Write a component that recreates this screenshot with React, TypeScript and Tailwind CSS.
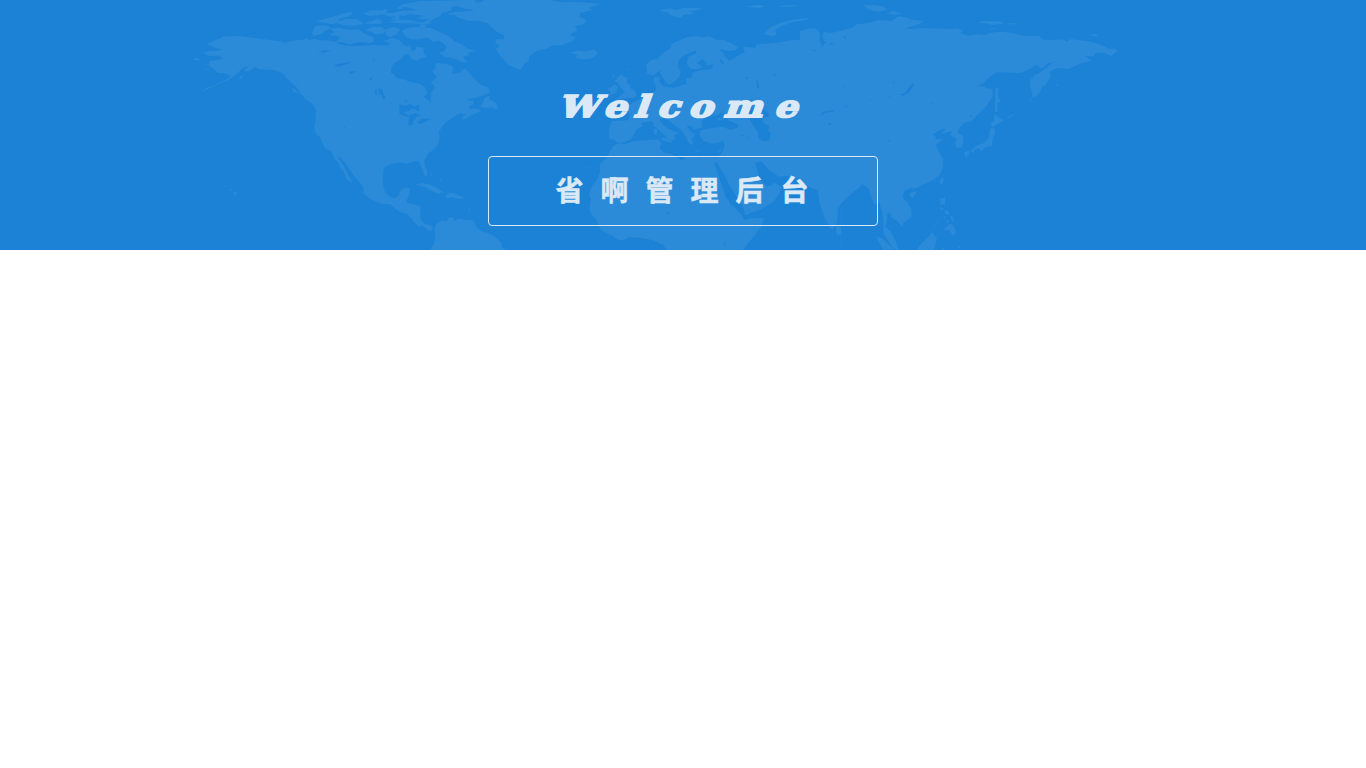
const A_LAND = [
  "M82 131L105 120 125 115 127 110 180 108 240 116 300 124 315 128 345 121 370 119 380 114 388 121 400 116 420 121 450 122 475 128 485 135 530 137 540 133 620 137 640 125 655 120 668 128 678 140 690 135 695 150 690 160 672 165 665 178 650 184 638 195 633 205 632 218 642 222 650 235 670 237 690 246 721 251V314L700 318 690 312 675 318 655 331 680 332 700 327 721 335V345L708 340 690 345 685 360 685 376 694 376 700 345 710 341 721 345V484L700 484 680 491 660 487 635 491 615 500 610 510 608 550 615 575 630 590 645 594 655 588 660 572 672 565 690 565 688 585 680 600 680 614 700 620 721 616V685L702 665 688 645 660 636 640 622 630 612 605 612 570 597 550 580 550 560 535 543 520 525 495 488 480 470 475 473 490 495 500 515 508 530 518 550 500 538 492 515 480 505 475 488 465 478 455 455 434 444 420 412 408 402 403 378 407 360 408 330 398 312 380 300 360 280 350 262 325 240 308 220 285 211 240 208 225 201 205 215 190 212 205 199 192 201 175 217 150 237 120 250 95 262 65 275 78 265 110 252 140 238 152 228 130 218 115 219 100 206 85 196 90 183 110 179 127 178 120 167 85 167 70 158 85 154 110 153 125 148 105 143 90 137Z",
  "M38 178L50 174 62 180 45 181ZM75 209L85 206 88 211ZM170 236L190 225 186 235ZM336 263L345 267 354 280 340 275ZM368 287L395 294 414 313 418 322 400 314 382 299ZM310 222L325 224 346 244 365 262 348 256 330 242ZM131 557L138 560 134 562ZM146 566L158 571 152 573ZM163 573L172 581 163 587Z",
  "M396 99L405 78 430 75 448 80 450 87 438 90 426 101 400 107ZM448 86L480 83 505 90 535 88 555 102 579 112 580 125 568 130 545 125 525 128 508 135 490 127 468 126 480 117 473 108 447 105 465 96Z",
  "M408 64L430 57 460 50 490 40 512 36 519 42 498 52 473 58 485 65 455 72ZM472 70L495 57 528 57 540 62 550 71 525 77 490 76ZM550 41L575 30 600 32 622 26 620 37 595 46 565 48ZM548 69L578 62 590 56 603 60 605 71 575 72ZM555 91L578 80 606 80 618 92 608 102 587 103 575 96ZM617 88L642 80 660 88 650 102 630 112 617 104ZM603 41L640 38 665 32 721 30V71L660 70 620 67 650 61 630 57 650 50 625 49ZM649 26L670 12 721 3V32L690 25ZM665 92L680 84 721 81V119L690 116 675 108ZM610 124L636 113 660 121 642 133ZM692 165L721 145V174L700 176Z",
];
const A_SEA = [
  "M411 153L430 152 433 146 437 151 455 152 437 156 428 161 426 156ZM460 196L485 190 519 184 495 195 475 200ZM505 220L516 213 530 215 515 221ZM568 238L579 229 574 243ZM576 181L584 177 583 184ZM596 264L606 268 617 295 609 298 602 281 595 281ZM585 267L590 267 590 287 585 280ZM626 311L635 305 634 310ZM674 300L682 300 681 306 676 306ZM491 380L497 382 496 387ZM404 242L408 244 405 247Z",
  "M470 129L515 133 545 131 575 136 530 138 490 136ZM665 20L700 25 670 26Z",
];
const B_LAND = [
  "M58 3L228 0 225 8 185 15 150 22 158 30 125 39 122 48 100 57 85 73 58 74ZM138 42L165 36 200 34 225 31 190 25 170 17 195 10 240 7 255 0 450 0 480 7 520 5 603 11 565 24 580 29 540 40 538 52 560 60 552 72 525 79 532 90 508 106 528 112 514 126 485 136 455 137 440 147 410 153 388 169 387 184 375 188 361 211 345 203 325 196 315 182 298 165 287 145 300 140 285 127 290 117 312 118 313 106 295 99 280 86 262 70 235 62 205 63 175 53 165 46Z",
  "M511 158L530 152 555 154 585 149 595 162 570 177 545 178 524 173 532 165Z",
  "M8 91L40 81 65 86 90 83 115 94 132 102 150 110 161 123 185 132 200 145 228 152 202 159 210 166 188 171 205 188 187 186 160 175 135 172 115 159 130 155 140 141 128 128 115 122 100 126 85 113 60 116 45 105 40 119 20 112ZM20 154L45 151 50 140 70 143 72 161 82 172 65 174 50 183 35 177ZM58 82L66 70 80 79 72 88Z",
  "M58 251L75 261 82 278 71 290 91 305 94 277 105 263 94 247 111 231 96 215 106 203 107 188 138 191 155 198 160 208 155 222 180 218 195 204 210 221 225 239 240 253 266 264 269 278 248 286 225 294 202 298 210 303 219 300 221 313 206 318 210 327 236 326 242 334 215 346 190 359 184 354 199 343 180 340 160 351 138 367 126 381 116 397 120 409 114 431 105 445 84 462 73 480 74 495 82 515 80 530 72 524 64 501 58 488Z",
  "M240 322L248 309 255 293 270 286 267 298 290 310 294 321 288 331 280 322 264 323ZM46 554L65 549 89 553 112 565 132 577 115 581 89 569 75 561ZM137 586L151 578 171 582 193 595 170 596 158 592 139 594ZM179 590L194 592 182 598ZM206 622L210 630 207 637ZM90 513L93 527 98 530ZM118 540L129 547 124 538Z",
  "M-2 582L8 566 31 563 29 580 16 594 18 608 40 613 59 620 55 635 60 655 74 673 90 675 99 684 97 692 82 690 66 676 49 674 43 658 30 652 20 637 0 630Z",
  "M91 750L102 730 106 711 103 690 108 672 130 660 139 667 147 653 160 650 161 664 175 656 195 659 220 660 230 681 245 694 268 700 284 709 296 721 307 731 305 740 318 750Z",
  "M632 473L623 486 612 496 610 508 598 521 590 541 578 556 570 572 567 584 573 598 568 628 575 645 590 660 596 674 604 690 620 706 634 715 634 600ZM558 497L562 499 558 503ZM567 500L574 502 569 504ZM583 501L589 497 587 503Z",
];
const B_SEA = [
  "M-2 313L18 318 30 332 10 336 25 348 45 340 62 345 48 352 20 350 -2 342ZM27 360L36 349 50 354 41 360 38 374 30 374ZM52 366L65 355 91 357 70 369 58 373ZM170 290L173 287 172 292ZM-2 121L25 124 35 131 18 139ZM-2 61L25 59 65 68 90 58 45 55 75 48 30 42 10 48-2 44Z",
];
const C_LAND = [
  "M138 194L152 180 172 176 190 158 210 147 215 132 235 122 260 112 290 108 308 112 325 108 350 119 370 120 395 130 413 141 408 150 385 153 355 147 370 158 376 170 387 182 403 174 416 166 435 155 430 140 465 143 470 133 510 130 545 126 575 120 598 120 612 128 630 135 632 129 618 123 622 107 614 98 634 88 645 84 655 94 660 106 657 124 665 137 662 145 677 130 668 114 673 95 690 99 721 94V530L705 542 685 550 655 555 657 580 665 612 680 660 690 685 702 678 712 655 712 626 721 620V750H240L200 750 190 735 160 721 135 716 108 716 90 712 65 722 50 718 28 700 0 688V491L22 472 29 455 40 438 58 430 75 433 97 424 145 420 175 418 185 431 178 443 190 457 215 463 245 481 258 470 285 469 300 473 320 471 350 473 361 466 370 450 374 437 369 422 350 430 335 431 310 422 298 404 304 391 330 385 370 380 390 390 414 382 413 373 385 361 378 350 368 360 352 361 353 350 340 345 320 344 306 364 308 382 282 389 272 378 260 376 269 392 286 404 275 418 281 436 265 428 250 398 238 386 222 374 205 360 188 354 178 359 190 375 205 386 223 394 238 400 224 404 224 421 207 419 185 397 168 383 155 363 140 366 123 369 128 379 108 389 105 398 92 419 78 425 54 429 42 419 28 418 27 385 36 363 84 361 89 345 79 329 60 323 65 317 85 315 110 303 130 290 150 278 166 275 169 258 160 246 162 232 180 232 177 245 192 260 223 263 259 251 259 235 276 232 276 218 300 211 335 207 341 200 310 201 292 208 270 205 260 190 265 170 289 160 288 151 273 158 255 164 235 181 233 200 242 213 239 227 223 247 205 254 194 241 180 220 182 208 162 226 142 222Z",
  "M54 230L65 222 71 231 85 233 78 246 92 257 90 264 105 273 110 284 103 293 75 295 50 301 61 286 74 276 60 262 54 248 43 246ZM22 268L45 253 53 260 49 278 25 288 32 275ZM182 414L220 415 214 428 193 424ZM161 373L170 370 168 382 161 381ZM161 386L172 386 170 404 162 403ZM286 450L309 453 289 455ZM349 453L368 446 360 455ZM82 206L91 206 88 211ZM42 189L47 188 45 194ZM38 222L43 228 38 240Z",
  "M178 31L210 25 230 31 250 24 308 24 292 31 270 33 280 42 252 44 240 54 215 47 206 39ZM440 21L465 14 495 18 480 24ZM533 20L555 16 602 16 570 21ZM490 102L510 82 545 68 585 58 628 54 614 61 575 67 545 78 525 91 531 104 520 109Z",
];
const C_SEA = [
  "M445 334L480 320 492 328 505 338 508 349 485 353 490 368 508 378 504 391 512 400 509 421 491 424 475 415 474 395 463 381 451 362ZM343 485L352 490 363 510 374 528 389 558 409 588 431 625 435 647 450 640 485 627 520 605 538 581 547 562 525 548 511 557 500 558 480 540 475 520 465 488 485 485 498 500 515 516 537 530 562 527 580 535 618 536 642 552 640 566 653 570 658 608 672 650 688 681 700 686 712 667 713 628 721 620V751L428 751 439 736 465 705 484 680 491 655 455 654 432 660 425 645 403 622 377 591 363 550Z",
  "M-2 690L25 701 50 719 67 722 88 712 130 714 148 732 142 751H-2ZM360 178L370 185 371 196 361 187ZM520 225L530 219 525 229ZM469 239L475 246 478 268 472 264ZM436 230L446 235 439 238ZM421 403L433 407 424 409ZM441 411L449 412 445 417ZM660 339L685 330 703 333 675 340 664 345ZM683 370L697 371 686 375ZM197 634L212 642 204 644ZM371 721L379 740 374 738ZM389 605L395 609 391 617Z",
  "M292 188L306 178 320 187 318 198 340 192 335 202 310 202ZM347 349L365 337 376 344 369 358Z",
];
const D_LAND = [
  "M115 94L160 82 170 73 205 69 235 60 275 63 295 49 325 54 335 59 368 63 360 71 340 77 310 88 380 84 440 88 470 85 487 91 482 100 505 107 530 103 555 105 570 98 605 95 640 100 675 108 721 108V194L698 197 683 210 658 219 590 217 568 232 552 248 534 258 553 260 564 266 577 265 578 288 568 306 555 324 535 342 513 364 495 367 476 386 472 397 488 408 490 432 482 444 468 442 465 427 471 416 452 406 455 394 437 398 420 403 437 388 428 386 399 403 408 410 405 418 429 418 408 435 416 454 430 478 428 506 418 526 396 542 370 553 350 565 340 565 345 573 335 562 315 572 308 582 311 598 322 607 334 628 335 650 310 669 307 682 291 662 275 653 270 638 261 640 261 660 255 680 274 697 286 720 297 750 278 746 263 720 251 700 250 664 245 630 237 607 225 616 215 595 205 565 185 552 180 562 165 572 146 589 133 600 113 624 112 655 101 684 90 686 80 660 66 620 56 590 53 557 40 568 20 556 0 548V94L35 84 55 98 56 120 65 132 59 144 78 130 67 112 70 97 90 102 110 96Z",
  "M189 16L220 15 245 18 264 28 235 35 210 31ZM260 39L280 32 305 42 280 44ZM0 57L25 57 0 64ZM536 70L548 63 575 64 608 65 610 71 575 74 555 70ZM614 70L655 70 640 74ZM574 84L597 87 575 88ZM587 264L595 264 594 284 602 306 592 310 593 333 585 337 585 305ZM583 342L594 350 613 361 590 373 578 381 570 373 582 362ZM570 387L582 383 585 399 577 420 576 439 558 440 545 453 535 445 515 449 526 439 550 430 566 415ZM492 457L508 450 506 463 498 474ZM509 451L528 448 518 458ZM620 352L650 338 628 354ZM417 545L429 529 431 542 425 557ZM330 578L350 574 338 595 329 587ZM420 596L435 593 435 612 422 616ZM419 622L431 624 427 633ZM433 633L445 631 447 645 440 644ZM452 645L459 652 461 667 454 660ZM432 649L438 651 434 658ZM440 658L446 664 440 672ZM450 672L461 675 467 698 458 708 449 691 430 690 438 682ZM397 686L417 661 410 674ZM110 675L123 684 124 701 112 708 108 690ZM227 709L246 715 265 733 280 750 250 750ZM350 750L360 735 385 710 396 697 411 716 402 750ZM421 750L435 740 430 750ZM470 746L480 737 484 742Z",
  "M721 218L703 226 690 244 696 270 698 293 721 276ZM689 302L696 294 692 307Z",
];
const D_SEA = [
  "M297 284L315 279 328 260 337 248 340 257 328 276 310 287ZM62 344L70 334 100 331 102 335 75 338 64 347ZM83 370L97 371 87 376ZM136 314L144 322 137 320ZM205 297L212 299 208 302ZM265 289L271 290 267 294ZM394 310L402 309 398 313ZM510 346L517 346 516 350 511 350ZM263 420L270 422 267 427ZM275 246L286 244 280 249ZM125 260L135 257 130 262ZM28 147L47 151 60 145 45 154ZM68 111L78 120 70 116ZM90 128L103 133 92 135ZM131 107L140 113 133 116Z",
];
const E_LAND = [
  "M238 108L245 118 275 121 310 118 320 125 330 118 352 119 395 126 430 137 449 148 463 145 473 153 454 168 432 158 405 160 402 168 375 168 394 183 365 189 325 207 290 204 270 215 271 232 258 254 247 260 235 283 220 294 211 260 210 240 228 224 252 210 280 187 262 190 252 202 240 204 230 194 203 210 178 219Z",
  "M387 104L405 102 415 106 405 110ZM286 250L296 258 290 258ZM341 273L345 276 341 278Z",
];

const REGIONS = [
  { shift: "translate(180 0) scale(.33333)", land: A_LAND, sea: A_SEA },
  { shift: "translate(400 0) scale(.33333)", land: B_LAND, sea: B_SEA },
  { shift: "translate(600 0) scale(.33333)", land: C_LAND, sea: C_SEA },
  { shift: "translate(800 0) scale(.33333)", land: D_LAND, sea: D_SEA },
  { shift: "translate(960 0) scale(.33333)", land: E_LAND, sea: [] },
];

function WorldMap() {
  return (
    <svg className="absolute inset-0" width="1366" height="250" viewBox="0 0 1366 250" aria-hidden="true">
      {REGIONS.map((r) => (
        <g key={r.shift} transform={r.shift}>
          {r.land.map((d) => (
            <path key={d} d={d} fill="#2b8bd8" />
          ))}
          {r.sea.map((d) => (
            <path key={d} d={d} fill="#1c82d6" />
          ))}
        </g>
      ))}
    </svg>
  );
}

function Wordmark() {
  return (
    <svg className="block overflow-visible" width="240" height="28" viewBox="0 0 240 28">
      <text
        transform="translate(0 24.7) skewX(-20) scale(1.22 1)"
        x="-4.5 32.6 57.6 76.6 102.2 131.3 172.6"
        y="0"
        fill="#dbe9f6"
        stroke="#dbe9f6"
        strokeWidth="1.9"
        className="font-['DejaVu_Serif',serif] text-[30px] font-bold"
      >
        Welcome
      </text>
    </svg>
  );
}

export default function App() {
  return (
    <div className="min-h-screen bg-white">
      <header className="relative h-[250px] overflow-hidden bg-[#1c82d6]">
        <WorldMap />
        <div className="relative flex flex-col items-center pt-[92px]">
          <Wordmark />
          <h1 className="mt-9 flex h-[70px] w-[390px] items-center justify-center rounded-[4px] border border-[#dbe9f6] pb-[4px] pl-[15px] font-['Noto_Sans_CJK_SC',sans-serif] text-[28px] leading-none font-bold tracking-[17px] text-[#dbe9f6] [-webkit-text-stroke:0.5px_#dbe9f6]">
            省啊管理后台
          </h1>
        </div>
      </header>
    </div>
  );
}
